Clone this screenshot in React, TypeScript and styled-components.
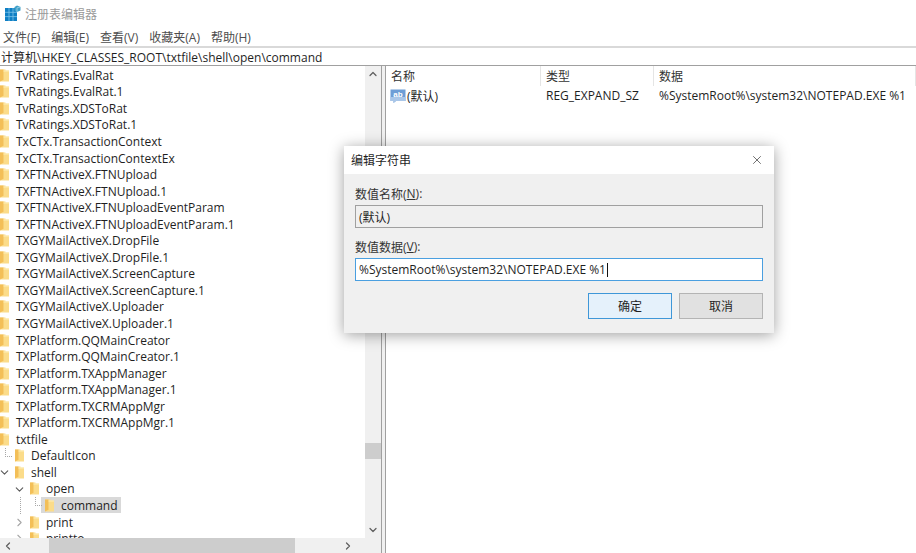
import styled, { createGlobalStyle } from 'styled-components';
import { ChevronDown, ChevronLeft, ChevronRight, ChevronUp, X } from 'lucide-react';

const GlobalStyle = createGlobalStyle`
    html, body {
        margin: 0;
        padding: 0;
        background: #fff;
    }
    * {
        box-sizing: border-box;
    }
`;

const Window = styled.div`
    position: relative;
    width: 916px;
    height: 553px;
    overflow: hidden;
    display: flex;
    flex-direction: column;
    background: #fff;
    color: #1f1f1f;
    font-family: 'Open Sans', 'Noto Sans CJK SC', sans-serif;
    font-size: 12px;
`;

const TitleBar = styled.div`
    height: 27px;
    flex: none;
    display: flex;
    align-items: center;
    padding-left: 5px;
    gap: 4px;
    color: #9a9a9a;
`;

const MenuBar = styled.div`
    height: 19px;
    flex: none;
    display: flex;
    align-items: center;
    gap: 11px;
    padding-left: 3px;
    color: #4d4d4d;
`;

const AddressBar = styled.div`
    height: 20px;
    flex: none;
    display: flex;
    align-items: center;
    padding-left: 1px;
    border-top: 2px solid #d9d9d9;
    border-bottom: 1px solid #a0a0a0;
`;

const Panes = styled.div`
    flex: 1;
    min-height: 0;
    display: flex;
`;

const TreePane = styled.div`
    width: 381px;
    flex: none;
    display: flex;
    flex-direction: column;
`;

const TreeBody = styled.div`
    flex: 1;
    min-height: 0;
    display: flex;
`;

const TreeList = styled.div`
    flex: 1;
    min-width: 0;
    overflow: hidden;
    padding-top: 1px;
`;

const Row = styled.div<{ $level: number }>`
    position: relative;
    height: 16.56px;
    display: flex;
    align-items: center;
    padding-left: ${(p) => p.$level * 15}px;
    white-space: nowrap;
`;

const RowLabel = styled.div<{ $selected?: boolean }>`
    display: flex;
    align-items: center;
    gap: 7px;
    height: 16px;
    margin-left: ${(p) => (p.$selected ? '-4px' : '0')};
    padding: ${(p) => (p.$selected ? '0 3px 0 4px' : '0')};
    background: ${(p) => (p.$selected ? '#d9d9d9' : 'transparent')};
`;

const Toggle = styled.span<{ $level: number }>`
    position: absolute;
    left: ${(p) => (p.$level - 1) * 15 - 2}px;
    top: 2px;
    display: flex;
    color: ${(p) => (p.$level > 0 ? '#5a5a5a' : '#5a5a5a')};
`;

const Elbow = styled.span<{ $level: number }>`
    position: absolute;
    left: ${(p) => (p.$level - 1) * 15 + 5}px;
    top: 0;
    width: 7px;
    height: 9px;
    border-left: 1px dotted #a8a8a8;
    border-bottom: 1px dotted #a8a8a8;
`;

const Guide = styled.span`
    position: absolute;
    left: 20px;
    top: 0;
    bottom: 0;
    border-left: 1px dotted #a8a8a8;
`;

const VScroll = styled.div`
    width: 16px;
    flex: none;
    display: flex;
    flex-direction: column;
    background: #f0f0f0;
    color: #606060;
`;

const ScrollButton = styled.div`
    width: 16px;
    height: 16px;
    flex: none;
    display: flex;
    align-items: center;
    justify-content: center;
`;

const VThumb = styled.div`
    height: 16px;
    flex: none;
    margin-top: auto;
    background: #cdcdcd;
`;

const HScroll = styled.div`
    height: 15px;
    flex: none;
    display: flex;
    align-items: center;
    background: #f0f0f0;
    color: #606060;
`;

const HThumb = styled.div`
    width: 246px;
    height: 15px;
    margin-left: 33px;
    margin-right: auto;
    background: #cdcdcd;
`;

const ScrollSpacer = styled.div`
    height: 63px;
    flex: none;
`;

const ScrollCorner = styled.div`
    width: 16px;
    height: 15px;
    flex: none;
    margin-left: 9px;
`;

const Splitter = styled.div`
    width: 5px;
    flex: none;
    background: #f0f0f0;
    border-left: 1px solid #a0a0a0;
    border-right: 1px solid #a0a0a0;
    margin-left: 0;
`;

const ListPane = styled.div`
    flex: 1;
    min-width: 0;
`;

const ListRow = styled.div<{ $header?: boolean }>`
    display: grid;
    grid-template-columns: 155px 113px 1fr;
    height: ${(p) => (p.$header ? '20px' : '19px')};
    align-items: center;
    color: ${(p) => (p.$header ? '#333' : '#1f1f1f')};
    white-space: nowrap;
`;

const HeadCell = styled.div`
    height: 20px;
    display: flex;
    align-items: center;
    padding-left: 5px;
    border-right: 1px solid #e5e5e5;
`;

const Cell = styled.div`
    display: flex;
    align-items: center;
    gap: 1px;
    padding-left: 5px;
`;

const NameCell = styled(Cell)`
    padding-left: 4px;
`;

const Dialog = styled.div`
    position: absolute;
    left: 344px;
    top: 146px;
    width: 430px;
    height: 187px;
    display: flex;
    flex-direction: column;
    background: #f0f0f0;
    box-shadow: 0 2px 14px rgba(0, 0, 0, 0.38);
`;

const DialogTitle = styled.div`
    height: 28px;
    flex: none;
    display: flex;
    align-items: center;
    justify-content: space-between;
    padding: 0 10px 0 7px;
    background: #fff;
`;

const DialogBody = styled.div`
    flex: 1;
    display: flex;
    flex-direction: column;
    padding: 11px 11px 0;
`;

const FieldLabel = styled.div`
    height: 17px;
    display: flex;
    align-items: center;
    margin-bottom: 3px;
    color: #333;
    u {
        text-underline-offset: 1px;
    }
`;

const Field = styled.div<{ $active?: boolean }>`
    height: 23px;
    display: flex;
    align-items: center;
    padding-left: 3px;
    margin-bottom: ${(p) => (p.$active ? '12px' : '10px')};
    white-space: nowrap;
    border: 1px solid ${(p) => (p.$active ? '#4a9fe0' : '#a0a0a0')};
    background: ${(p) => (p.$active ? '#fff' : '#f0f0f0')};
`;

const Caret = styled.span`
    width: 1px;
    height: 14px;
    margin-left: 1px;
    background: #111;
`;

const DialogButtons = styled.div`
    display: flex;
    justify-content: flex-end;
    gap: 7px;
    padding-right: 0;
`;

const DialogButton = styled.div<{ $primary?: boolean }>`
    width: 84px;
    height: 26px;
    display: flex;
    align-items: center;
    justify-content: center;
    color: #1f1f1f;
    border: 1px solid ${(p) => (p.$primary ? '#3f97d8' : '#b4b4b4')};
    background: ${(p) => (p.$primary ? '#e5f1fb' : '#e1e1e1')};
`;

type Node = {
    name: string;
    level: number;
    toggle?: 'open' | 'closed';
    elbow?: boolean;
    guide?: boolean;
    selected?: boolean;
};

const roots = [
    'TvRatings.EvalRat',
    'TvRatings.EvalRat.1',
    'TvRatings.XDSToRat',
    'TvRatings.XDSToRat.1',
    'TxCTx.TransactionContext',
    'TxCTx.TransactionContextEx',
    'TXFTNActiveX.FTNUpload',
    'TXFTNActiveX.FTNUpload.1',
    'TXFTNActiveX.FTNUploadEventParam',
    'TXFTNActiveX.FTNUploadEventParam.1',
    'TXGYMailActiveX.DropFile',
    'TXGYMailActiveX.DropFile.1',
    'TXGYMailActiveX.ScreenCapture',
    'TXGYMailActiveX.ScreenCapture.1',
    'TXGYMailActiveX.Uploader',
    'TXGYMailActiveX.Uploader.1',
    'TXPlatform.QQMainCreator',
    'TXPlatform.QQMainCreator.1',
    'TXPlatform.TXAppManager',
    'TXPlatform.TXAppManager.1',
    'TXPlatform.TXCRMAppMgr',
    'TXPlatform.TXCRMAppMgr.1',
    'txtfile',
];

const nodes: Node[] = [
    ...roots.map((name) => ({ name, level: 0 })),
    { name: 'DefaultIcon', level: 1, elbow: true },
    { name: 'shell', level: 1, toggle: 'open' },
    { name: 'open', level: 2, toggle: 'open' },
    { name: 'command', level: 3, elbow: true, guide: true, selected: true },
    { name: 'print', level: 2, toggle: 'closed' },
    { name: 'printto', level: 2, toggle: 'closed' },
];

const menus = ['文件(F)', '编辑(E)', '查看(V)', '收藏夹(A)', '帮助(H)'];

const FolderIcon = () => (
    <svg width="9" height="13" viewBox="0 0 9 13" style={{ flex: 'none' }}>
        <path d="M0 0.5h5.5v1H9v11H0z" fill="#fbdc8a" />
        <path d="M0 0.5h3.5v10.2L0 12.5z" fill="#f3bf58" />
        <path d="M3.5 1.5H9v1H3.5z" fill="#fdeeb8" />
    </svg>
);

const RegeditIcon = () => (
    <svg width="16" height="17" viewBox="0 0 16 17">
        <rect x="0" y="3" width="12" height="13" fill="#0f7fc4" />
        <path d="M4 3v13M8 3v13M0 7.3h12M0 11.6h12" stroke="#7cc4ea" strokeWidth="0.8" />
        <path d="M12 0.5l3.5 1.5v3.4L12 7 9.5 5.4V2z" fill="#3fa0c8" />
        <path d="M12 2.8l3.5-0.8M12 2.8V7" stroke="#bfe3f2" strokeWidth="0.6" fill="none" />
    </svg>
);

const StringValueIcon = () => (
    <svg width="16" height="16" viewBox="0 0 16 16" style={{ flex: 'none' }}>
        <path d="M0.5 1.5h15v11.5H6l-2.5 2v-2h-3z" fill="#6e9ed6" />
        <path d="M0.5 9h15v4H6l-2.5 2v-2h-3z" fill="#a9c6e8" />
        <text x="8" y="9" textAnchor="middle" fontSize="8" fontWeight="700" fontFamily="Liberation Sans, sans-serif" fill="#fff">
            ab
        </text>
    </svg>
);

const App = () => {
    return (
        <Window>
            <GlobalStyle />
            <TitleBar>
                <RegeditIcon />
                <span>注册表编辑器</span>
            </TitleBar>
            <MenuBar>
                {menus.map((menu) => (
                    <span key={menu}>{menu}</span>
                ))}
            </MenuBar>
            <AddressBar>计算机\HKEY_CLASSES_ROOT\txtfile\shell\open\command</AddressBar>
            <Panes>
                <TreePane>
                    <TreeBody>
                        <TreeList>
                            {nodes.map((node) => (
                                <Row key={node.name} $level={node.level}>
                                    {node.guide && <Guide />}
                                    {node.elbow && <Elbow $level={node.level} />}
                                    {node.toggle && (
                                        <Toggle $level={node.level}>
                                            {node.toggle === 'open' ? (
                                                <ChevronDown size={13} strokeWidth={2} />
                                            ) : (
                                                <ChevronRight size={13} strokeWidth={2} color="#a6a6a6" />
                                            )}
                                        </Toggle>
                                    )}
                                    <RowLabel $selected={node.selected}>
                                        <FolderIcon />
                                        <span>{node.name}</span>
                                    </RowLabel>
                                </Row>
                            ))}
                        </TreeList>
                        <VScroll>
                            <ScrollButton>
                                <ChevronUp size={12} strokeWidth={2.5} />
                            </ScrollButton>
                            <ScrollSpacer style={{ height: 361 }} />
                            <VThumb style={{ marginTop: 0 }} />
                            <ScrollButton style={{ marginTop: 'auto' }}>
                                <ChevronDown size={12} strokeWidth={2.5} />
                            </ScrollButton>
                        </VScroll>
                    </TreeBody>
                    <HScroll>
                        <ScrollButton>
                            <ChevronLeft size={12} strokeWidth={2.5} />
                        </ScrollButton>
                        <HThumb />
                        <ScrollButton>
                            <ChevronRight size={12} strokeWidth={2.5} />
                        </ScrollButton>
                        <ScrollCorner />
                    </HScroll>
                </TreePane>
                <Splitter />
                <ListPane>
                    <ListRow $header>
                        <HeadCell>名称</HeadCell>
                        <HeadCell>类型</HeadCell>
                        <HeadCell>数据</HeadCell>
                    </ListRow>
                    <ListRow>
                        <NameCell>
                            <StringValueIcon />
                            <span>(默认)</span>
                        </NameCell>
                        <Cell>REG_EXPAND_SZ</Cell>
                        <Cell>%SystemRoot%\system32\NOTEPAD.EXE %1</Cell>
                    </ListRow>
                </ListPane>
            </Panes>
            <Dialog>
                <DialogTitle>
                    <span>编辑字符串</span>
                    <X size={14} strokeWidth={1.2} color="#333" />
                </DialogTitle>
                <DialogBody>
                    <FieldLabel>
                        数值名称(<u>N</u>):
                    </FieldLabel>
                    <Field>(默认)</Field>
                    <FieldLabel>
                        数值数据(<u>V</u>):
                    </FieldLabel>
                    <Field $active>
                        %SystemRoot%\system32\NOTEPAD.EXE %1
                        <Caret />
                    </Field>
                    <DialogButtons>
                        <DialogButton $primary>确定</DialogButton>
                        <DialogButton>取消</DialogButton>
                    </DialogButtons>
                </DialogBody>
            </Dialog>
        </Window>
    );
};

export default App;
